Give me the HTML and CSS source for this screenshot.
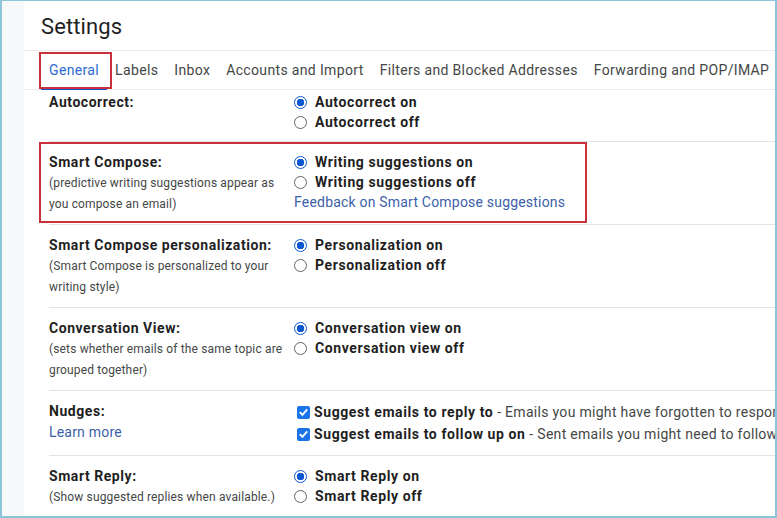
FILE: index.html
```html
<!DOCTYPE html>
<html>
<head>
    <title>Settings</title>
    <link rel="stylesheet" href="styles.css">
</head>
<body>
    <div class="frame">
        <div class="gutter"></div>
        <div class="panel">
            <h1 class="title">Settings</h1>

            <nav class="tabs">
                <span class="tab active marked">General</span>
                <span class="tab">Labels</span>
                <span class="tab">Inbox</span>
                <span class="tab">Accounts and Import</span>
                <span class="tab">Filters and Blocked Addresses</span>
                <span class="tab">Forwarding and POP/IMAP</span>
            </nav>

            <div class="rows">
                <div class="row first">
                    <div class="label">
                        <div class="name">Autocorrect:</div>
                    </div>
                    <div class="options">
                        <div class="opt"><span class="radio on"></span>Autocorrect on</div>
                        <div class="opt"><span class="radio"></span>Autocorrect off</div>
                    </div>
                </div>

                <div class="row marked">
                    <div class="label">
                        <div class="name">Smart Compose:</div>
                        <div class="desc">(predictive writing suggestions appear as you compose an email)</div>
                    </div>
                    <div class="options">
                        <div class="opt"><span class="radio on"></span>Writing suggestions on</div>
                        <div class="opt"><span class="radio"></span>Writing suggestions off</div>
                        <a class="link">Feedback on Smart Compose suggestions</a>
                    </div>
                </div>

                <div class="row">
                    <div class="label">
                        <div class="name">Smart Compose personalization:</div>
                        <div class="desc">(Smart Compose is personalized to your writing style)</div>
                    </div>
                    <div class="options">
                        <div class="opt"><span class="radio on"></span>Personalization on</div>
                        <div class="opt"><span class="radio"></span>Personalization off</div>
                    </div>
                </div>

                <div class="row">
                    <div class="label">
                        <div class="name">Conversation View:</div>
                        <div class="desc">(sets whether emails of the same topic are grouped together)</div>
                    </div>
                    <div class="options">
                        <div class="opt"><span class="radio on"></span>Conversation view on</div>
                        <div class="opt"><span class="radio"></span>Conversation view off</div>
                    </div>
                </div>

                <div class="row nudges">
                    <div class="label">
                        <div class="name">Nudges:</div>
                        <a class="link">Learn more</a>
                    </div>
                    <div class="options">
                        <div class="opt check-opt">
                            <span class="checkbox"><svg viewBox="0 0 14 14" width="14" height="14"><path d="M3 7.2 L5.8 10 L11 4.2" fill="none" stroke="#fff" stroke-width="2"/></svg></span>
                            Suggest emails to reply to<span class="note">&nbsp;- Emails you might have forgotten to respond to will appear at the top of your inbox</span>
                        </div>
                        <div class="opt check-opt">
                            <span class="checkbox"><svg viewBox="0 0 14 14" width="14" height="14"><path d="M3 7.2 L5.8 10 L11 4.2" fill="none" stroke="#fff" stroke-width="2"/></svg></span>
                            Suggest emails to follow up on<span class="note">&nbsp;- Sent emails you might need to follow up on will appear at the top of your inbox</span>
                        </div>
                    </div>
                </div>

                <div class="row">
                    <div class="label">
                        <div class="name">Smart Reply:</div>
                        <div class="desc">(Show suggested replies when available.)</div>
                    </div>
                    <div class="options">
                        <div class="opt"><span class="radio on"></span>Smart Reply on</div>
                        <div class="opt"><span class="radio"></span>Smart Reply off</div>
                    </div>
                </div>
            </div>
        </div>
    </div>
</body>
</html>
```

FILE: styles.css
```css
body {
    margin: 0;
    font-family: Roboto, "Liberation Sans", Arial, sans-serif;
    color: #1f1f1f;
    background: #fff;
}

.frame {
    width: 777px;
    height: 518px;
    box-sizing: border-box;
    border: 2px solid #8ec5da;
    border-top-width: 1px;
    display: flex;
    overflow: hidden;
}

.gutter {
    width: 22px;
    flex: none;
    background: #f7f8fa;
}

.panel {
    flex: 1;
    min-width: 0;
    background: #fff;
}

.title {
    margin: 0;
    padding: 12px 0 9px 17px;
    font-size: 22px;
    line-height: 28px;
    font-weight: 400;
    letter-spacing: 0.1px;
    color: #1f1f1f;
}

.tabs {
    display: flex;
    height: 38px;
    padding-left: 17px;
    border-top: 1px solid #e8eaed;
    border-bottom: 1px solid #e8eaed;
    white-space: nowrap;
}

.tab {
    position: relative;
    padding: 0 8px;
    font-size: 14px;
    line-height: 38px;
    letter-spacing: 0.35px;
    color: #444746;
}

.tab.active {
    color: #2c6bd3;
}

.tab.active::before {
    content: "";
    position: absolute;
    left: 0;
    right: 0;
    bottom: -1px;
    height: 3px;
    background: #0b57d0;
    border-radius: 3px 3px 0 0;
}

.tab.marked::after {
    content: "";
    position: absolute;
    left: -2px;
    right: -5px;
    top: 1px;
    bottom: 0;
    border: 2px solid #c8313b;
}

.rows {
    padding-left: 25px;
}

.row {
    position: relative;
    display: flex;
    padding: 10px 0 9px;
    border-bottom: 1px solid #e3e3e3;
    white-space: nowrap;
}

.row.first {
    padding: 2px 0 9px;
}

.row.nudges {
    padding-bottom: 10px;
}

.row.marked::after {
    content: "";
    position: absolute;
    left: -10px;
    top: 0;
    width: 548px;
    height: 81px;
    box-sizing: border-box;
    border: 2px solid #c8313b;
}

.label {
    width: 245px;
    flex: none;
    white-space: normal;
}

.name {
    font-size: 14px;
    line-height: 21px;
    font-weight: 700;
    letter-spacing: 0.55px;
    color: #1f1f1f;
}

.desc {
    font-size: 12px;
    line-height: 21px;
    letter-spacing: 0.15px;
    color: #444746;
    padding-right: 10px;
}

.options {
    font-size: 14px;
    line-height: 20px;
}

.opt {
    display: flex;
    align-items: center;
    font-weight: 700;
    letter-spacing: 0.6px;
    color: #1f1f1f;
}

.check-opt {
    line-height: 22px;
}

.note {
    font-weight: 400;
    letter-spacing: 0.3px;
    color: #444746;
}

.link {
    display: block;
    font-size: 14px;
    line-height: 20px;
    letter-spacing: 0.2px;
    color: #3d5fa9;
    text-decoration: none;
}

.radio {
    width: 13px;
    height: 13px;
    box-sizing: border-box;
    margin-right: 8px;
    border: 1px solid #5f6368;
    border-radius: 50%;
    background: #fff;
}

.radio.on {
    border: 1.5px solid #0b57d0;
    background: radial-gradient(circle, #0b57d0 0 3.5px, #fff 4px);
}

.checkbox {
    display: flex;
    align-items: center;
    justify-content: center;
    width: 13px;
    height: 13px;
    margin: 0 4px 0 3px;
    border-radius: 2px;
    background: #1a73e8;
}
```
